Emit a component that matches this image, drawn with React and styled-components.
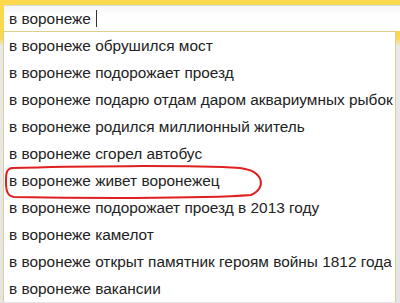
import React from "react";
import styled, { createGlobalStyle } from "styled-components";

const GlobalStyle = createGlobalStyle`
  html, body {
    margin: 0;
    padding: 0;
    background: #f2f2f2;
  }
`;

const Page = styled.div`
  position: relative;
  width: 400px;
  height: 303px;
  overflow: hidden;
  background: linear-gradient(to bottom, #fcd84c 0px, #fcd84c 38px, #e9e9e9 46px, #e4e4e4 100%);
  font-family: "Liberation Sans", Arial, sans-serif;
  padding-top: 5px;
  box-sizing: border-box;
`;

const SearchBox = styled.div`
  margin-left: 4px;
  height: 25px;
  display: flex;
  align-items: center;
  padding-left: 5px;
  background: linear-gradient(to bottom, #f6f6f6, #ffffff 40%, #fdfdfd);
  border-top: 1px solid #dcdcdc;
  font-size: 15.4px;
  color: #222;
`;

const Caret = styled.span`
  display: inline-block;
  width: 1px;
  height: 17px;
  margin-left: 5px;
  background: #333;
`;

const Panel = styled.div`
  margin-left: 3px;
  margin-right: 4px;
  background: #fff;
  border: 1px solid #ddd08e;
  border-bottom: none;
  display: flex;
  flex-direction: column;
`;

const Row = styled.div`
  height: 27px;
  display: flex;
  align-items: center;
  padding-left: 5px;
  font-size: 15.4px;
  color: #222;
  white-space: nowrap;
`;

const Mark = styled.svg`
  position: absolute;
  left: 0;
  top: 160px;
  width: 280px;
  height: 45px;
  pointer-events: none;
`;

const items = [
  "в воронеже обрушился мост",
  "в воронеже подорожает проезд",
  "в воронеже подарю отдам даром аквариумных рыбок",
  "в воронеже родился миллионный житель",
  "в воронеже сгорел автобус",
  "в воронеже живет воронежец",
  "в воронеже подорожает проезд в 2013 году",
  "в воронеже камелот",
  "в воронеже открыт памятник героям войны 1812 года",
  "в воронеже вакансии",
];

export default function App() {
  return (
    <Page>
      <GlobalStyle />
      <SearchBox>
        в воронеже<Caret />
      </SearchBox>
      <Panel>
        {items.map((t, i) => (
          <Row key={i}>{t}</Row>
        ))}
      </Panel>
      <Mark viewBox="0 160 280 45">
        <path
          d="M 12 168 C 70 166, 190 165, 240 168 C 264 171, 267 188, 251 195 C 200 199, 70 198, 14 197 C 7 196, 6 190, 6 182 C 6 174, 6 169, 12 168 Z"
          fill="none"
          stroke="#e02020"
          strokeWidth="2"
        />
      </Mark>
    </Page>
  );
}
